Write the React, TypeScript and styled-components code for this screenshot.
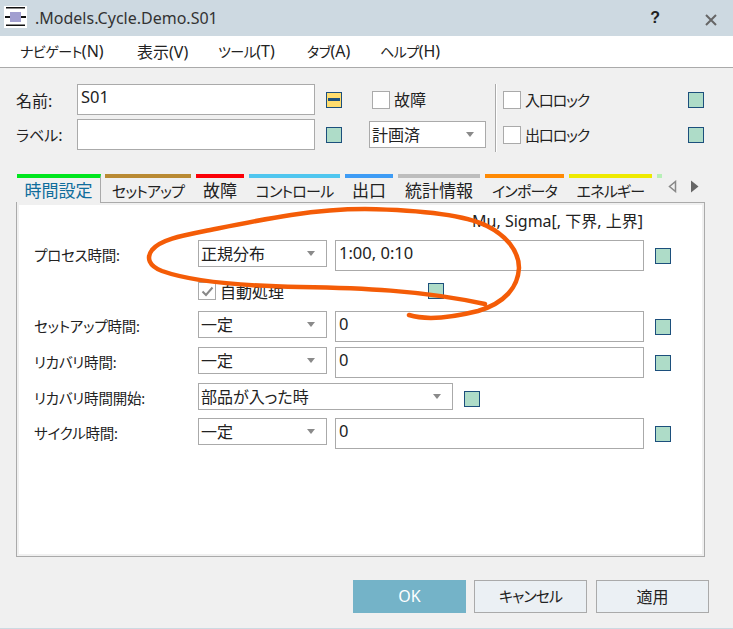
import React from "react";
import styled, { createGlobalStyle } from "styled-components";

const Global = createGlobalStyle`
  html, body { margin: 0; padding: 0; background: #f0f0f0; }
  #root { width: 733px; height: 629px; overflow: hidden; }
`;

const Window = styled.div`
  position: relative;
  width: 733px;
  height: 629px;
  box-sizing: border-box;
  display: flex;
  flex-direction: column;
  background: #f0f0f0;
  border-bottom: 1px solid #cdd9e1;
  color: #222;
  font-family: "Noto Sans", "Noto Sans CJK JP", sans-serif;
  font-feature-settings: "palt";
  font-size: 15px;
`;

const TitleBar = styled.header`
  height: 36px;
  flex: none;
  box-sizing: border-box;
  display: flex;
  align-items: center;
  background: #cdd9e1;
  padding: 0 16px 2px 4px;
`;

const TitleText = styled.span`
  margin: 2px 0 0 8px;
  font-size: 16px;
  flex: 1;
  color: #333;
`;

const HelpMark = styled.span`
  font-family: "Liberation Sans", sans-serif;
  font-weight: 700;
  font-size: 16px;
  color: #222;
  margin: 2px 45px 0 0;
`;

const CloseIcon = styled.svg`
  margin-top: 5px;
`;

const MenuBar = styled.nav`
  height: 32px;
  flex: none;
  box-sizing: border-box;
  display: flex;
  align-items: center;
  background: #fff;
  border-bottom: 1px solid #aaa;
  padding: 0 0 2px 20px;
  font-size: 16px;
`;

const MenuItem = styled.span<{ $w: number }>`
  width: ${(p) => p.$w}px;
  white-space: nowrap;
`;

const Kana = styled.span<{ $size: number; $track: number }>`
  font-size: ${(p) => p.$size}px;
  letter-spacing: ${(p) => p.$track}px;
`;

const TopForm = styled.section`
  display: flex;
  margin: 16px 0 0 16px;
  height: 68px;
`;

const NameGrid = styled.div`
  display: grid;
  grid-template-columns: 61px 238px 54px 117px;
  grid-template-rows: 31px 31px;
  row-gap: 4px;
  align-items: center;
`;

const FieldLabel = styled.label`
  font-size: 16px;
  white-space: nowrap;
`;

const TextBox = styled.div<{ $w: number }>`
  width: ${(p) => p.$w}px;
  height: 31px;
  flex: none;
  box-sizing: border-box;
  background: #fff;
  border: 1px solid #aaa;
  padding: 0 3px;
  font-size: 16.5px;
  line-height: 23px;
`;

const Swatch = styled.span<{ $on?: boolean; $left?: number; $top?: number }>`
  width: 16px;
  height: 16px;
  flex: none;
  box-sizing: border-box;
  display: flex;
  align-items: center;
  justify-content: center;
  margin-left: ${(p) => p.$left ?? 0}px;
  margin-top: ${(p) => p.$top ?? 0}px;
  background: ${(p) => (p.$on ? "#ffdd6e" : "#aedcc8")};
  border: 1px solid #1c4f7c;
`;

const SwatchDash = styled.span`
  width: 12px;
  height: 3px;
  background: #1c4f7c;
`;

const SwatchCell = styled.div`
  display: flex;
  align-items: center;
  padding-left: 11px;
`;

const CheckLine = styled.div<{ $left?: number }>`
  display: flex;
  align-items: center;
  margin-left: ${(p) => p.$left ?? 0}px;
  font-size: 16px;
  line-height: 20px;
  white-space: nowrap;
`;

const CheckBox = styled.span`
  width: 18px;
  height: 18px;
  flex: none;
  box-sizing: border-box;
  display: flex;
  align-items: center;
  justify-content: center;
  background: #fff;
  border: 1px solid #aaa;
  margin-right: 4px;
`;

const ComboBox = styled.div<{ $w: number }>`
  width: ${(p) => p.$w}px;
  height: 27px;
  flex: none;
  box-sizing: border-box;
  display: flex;
  align-items: center;
  justify-content: space-between;
  background: #fff;
  border: 1px solid #aaa;
  padding: 0 11px 2px 2px;
  font-size: 16px;
`;

const ComboArrow = styled.span`
  width: 0;
  height: 0;
  margin-top: 2px;
  border-left: 4px solid transparent;
  border-right: 4px solid transparent;
  border-top: 5px solid #8a8a8a;
`;

const Divider = styled.div`
  width: 2px;
  height: 68px;
  margin-left: 9px;
  background: linear-gradient(to right, #aaa 50%, #fff 50%);
`;

const LockGrid = styled.div`
  display: grid;
  grid-template-columns: 185px 16px;
  grid-template-rows: 31px 31px;
  row-gap: 4px;
  align-items: center;
  margin-left: 6px;
`;

const TabStrip = styled.div`
  display: flex;
  align-items: flex-end;
  height: 28px;
  margin: 22px 0 0 16px;
  padding-left: 1px;
  position: relative;
  z-index: 1;
`;

const Tab = styled.div<{ $w: number; $color: string; $active?: boolean }>`
  width: ${(p) => p.$w}px;
  height: ${(p) => (p.$active ? 29 : 28)}px;
  margin-right: ${(p) => (p.$active ? 4 : 5)}px;
  margin-bottom: ${(p) => (p.$active ? -1 : 0)}px;
  box-sizing: border-box;
  flex: none;
  text-align: center;
  border-top: 4px solid ${(p) => p.$color};
  border-right: ${(p) => (p.$active ? "1px solid #aaa" : "0")};
  background: #f0f0f0;
  color: ${(p) => (p.$active ? "#0f6d9c" : "#222")};
  font-size: 17px;
  line-height: 25px;
  white-space: nowrap;
`;

const TabSliver = styled.div`
  width: 5px;
  height: 28px;
  border-top: 4px solid #b7f0b7;
  box-sizing: border-box;
`;

const TabArrows = styled.div`
  display: flex;
  align-items: center;
  gap: 13px;
  align-self: flex-start;
  margin: 6px 0 0 6px;
`;

const Pane = styled.main`
  width: 689px;
  height: 355px;
  flex: none;
  box-sizing: border-box;
  margin-left: 16px;
  border: 1px solid #aaa;
  padding: 2px;
`;

const PaneInner = styled.div`
  height: 100%;
  box-sizing: border-box;
  background: #fff;
  padding: 6px 0 0 15px;
  display: flex;
  flex-direction: column;
`;

const Hint = styled.div`
  width: 609px;
  height: 23px;
  text-align: right;
  font-size: 16px;
  line-height: 20px;
  white-space: nowrap;
`;

const Row = styled.div<{ $gap: number }>`
  display: flex;
  align-items: flex-start;
  margin-top: ${(p) => p.$gap}px;
`;

const RowLabel = styled.label`
  width: 164px;
  flex: none;
  line-height: 31px;
  font-size: 14.5px;
  letter-spacing: -0.2px;
  white-space: nowrap;
`;

const ValueBox = styled(TextBox)`
  margin-left: 8px;
`;

const AutoRow = styled.div`
  display: flex;
  align-items: center;
  height: 18px;
  margin: 11px 0 0 164px;
  font-size: 16px;
`;

const Footer = styled.footer`
  display: flex;
  justify-content: flex-end;
  gap: 8px;
  margin-top: 23px;
  padding-right: 24px;
`;

const Button = styled.button<{ $primary?: boolean }>`
  width: 113px;
  height: 33px;
  box-sizing: border-box;
  margin: 0;
  padding: 0 0 2px;
  font: inherit;
  font-size: 16px;
  color: ${(p) => (p.$primary ? "#fff" : "#222")};
  background: ${(p) => (p.$primary ? "#74b3c8" : "#ebf0f4")};
  border: ${(p) => (p.$primary ? "0" : "1px solid #aaa")};
  &:last-child {
    margin-left: 1px;
  }
`;

const Scribble = styled.svg`
  position: absolute;
  left: 0;
  top: 0;
  z-index: 5;
  pointer-events: none;
`;

const tabs: { label: string; w: number; color: string; kana?: boolean }[] = [
  { label: "セットアップ", w: 86, color: "#b98a33", kana: true },
  { label: "故障", w: 48, color: "#fb0007" },
  { label: "コントロール", w: 91, color: "#4fc6ef", kana: true },
  { label: "出口", w: 48, color: "#3e9cf5" },
  { label: "統計情報", w: 82, color: "#bdbdbd" },
  { label: "インポータ", w: 79, color: "#ff8a04", kana: true },
  { label: "エネルギー", w: 83, color: "#eeea00", kana: true },
];

const TimeRow = ({ label, mode, gap }: { label: string; mode: string; gap: number }) => (
  <Row $gap={gap}>
    <RowLabel>{label}</RowLabel>
    <ComboBox $w={129}>
      {mode}
      <ComboArrow />
    </ComboBox>
    <ValueBox $w={309}>0</ValueBox>
    <Swatch $left={11} $top={8} />
  </Row>
);

export default function App() {
  return (
    <Window>
      <Global />
      <TitleBar>
        <svg width="23" height="22" viewBox="0 0 23 22">
          <rect width="23" height="22" fill="#fff" />
          <path d="M2 1h19v1.5H2zM2 18.5h19V20H2zM1 10h5v2H1zM17 10h5v2h-5z" fill="#111" />
          <rect x="6" y="6" width="11" height="10" fill="#a29fd0" />
        </svg>
        <TitleText>.Models.Cycle.Demo.S01</TitleText>
        <HelpMark>?</HelpMark>
        <CloseIcon width="12" height="12" viewBox="0 0 12 12">
          <path d="M1 1l10 10M11 1L1 11" stroke="#666" strokeWidth="2" />
        </CloseIcon>
      </TitleBar>
      <MenuBar>
        <MenuItem $w={117}>
          <Kana $size={14} $track={-0.5}>ナビゲート</Kana>(N)
        </MenuItem>
        <MenuItem $w={81}>表示(V)</MenuItem>
        <MenuItem $w={89}>
          <Kana $size={14} $track={-0.5}>ツール</Kana>(T)
        </MenuItem>
        <MenuItem $w={73}>
          <Kana $size={14} $track={-0.5}>タブ</Kana>(A)
        </MenuItem>
        <MenuItem $w={70}>
          <Kana $size={14} $track={-0.5}>ヘルプ</Kana>(H)
        </MenuItem>
      </MenuBar>
      <TopForm>
        <NameGrid>
          <FieldLabel>名前:</FieldLabel>
          <TextBox $w={238}>S01</TextBox>
          <SwatchCell>
            <Swatch $on>
              <SwatchDash />
            </Swatch>
          </SwatchCell>
          <CheckLine $left={3}>
            <CheckBox />
            故障
          </CheckLine>
          <FieldLabel>
            <Kana $size={15} $track={0}>ラベル</Kana>:
          </FieldLabel>
          <TextBox $w={238} />
          <SwatchCell>
            <Swatch />
          </SwatchCell>
          <ComboBox $w={117}>
            計画済
            <ComboArrow />
          </ComboBox>
        </NameGrid>
        <Divider />
        <LockGrid>
          <CheckLine>
            <CheckBox />
            <Kana $size={15} $track={-1.2}>入口ロック</Kana>
          </CheckLine>
          <Swatch />
          <CheckLine>
            <CheckBox />
            <Kana $size={15} $track={-1.2}>出口ロック</Kana>
          </CheckLine>
          <Swatch />
        </LockGrid>
      </TopForm>
      <TabStrip>
        <Tab $w={84} $color="#00e61e" $active>
          時間設定
        </Tab>
        {tabs.map((t) => (
          <Tab key={t.label} $w={t.w} $color={t.color}>
            {t.kana ? <Kana $size={15} $track={-0.8}>{t.label}</Kana> : t.label}
          </Tab>
        ))}
        <TabSliver />
        <TabArrows>
          <svg width="9" height="13" viewBox="0 0 9 13">
            <path d="M7.5 1.5v10L1.5 6.5z" fill="#f0f0f0" stroke="#888" strokeWidth="1.5" />
          </svg>
          <svg width="9" height="13" viewBox="0 0 9 13">
            <path d="M1 0.5v12l7.5-6z" fill="#666" />
          </svg>
        </TabArrows>
      </TabStrip>
      <Pane>
        <PaneInner>
          <Hint>Mu, Sigma[, 下界, 上界]</Hint>
          <Row $gap={6}>
            <RowLabel>プロセス時間:</RowLabel>
            <ComboBox $w={129}>
              正規分布
              <ComboArrow />
            </ComboBox>
            <ValueBox $w={309}>1:00, 0:10</ValueBox>
            <Swatch $left={11} $top={8} />
          </Row>
          <AutoRow>
            <CheckBox>
              <svg width="13" height="11" viewBox="0 0 13 11">
                <path d="M1.5 5.5l3.5 3.5 6.5-7.5" fill="none" stroke="#888" strokeWidth="2" />
              </svg>
            </CheckBox>
            自動処理
            <Swatch $left={144} />
          </AutoRow>
          <TimeRow label="セットアップ時間:" mode="一定" gap={11} />
          <TimeRow label="リカバリ時間:" mode="一定" gap={5} />
          <Row $gap={5}>
            <RowLabel>リカバリ時間開始:</RowLabel>
            <ComboBox $w={255}>
              部品が入った時
              <ComboArrow />
            </ComboBox>
            <Swatch $left={11} $top={8} />
          </Row>
          <TimeRow label="サイクル時間:" mode="一定" gap={4} />
        </PaneInner>
      </Pane>
      <Footer>
        <Button $primary>OK</Button>
        <Button>
          <Kana $size={15} $track={-1}>キャンセル</Kana>
        </Button>
        <Button>適用</Button>
      </Footer>
      <Scribble width="733" height="629" viewBox="0 0 733 629">
        <path
          d="M409 315C425 320 450 318 478 311C505 303 518 287 519 268C519 250 505 235 487 226C465 215 420 210 365 209C310 209 260 220 205 231C180 236 160 240 152 250C146 258 149 266 162 271C190 281 240 286 300 287C360 288 420 290 485 304"
          fill="none"
          stroke="#f45c07"
          strokeWidth="4.5"
          strokeLinecap="round"
        />
      </Scribble>
    </Window>
  );
}
